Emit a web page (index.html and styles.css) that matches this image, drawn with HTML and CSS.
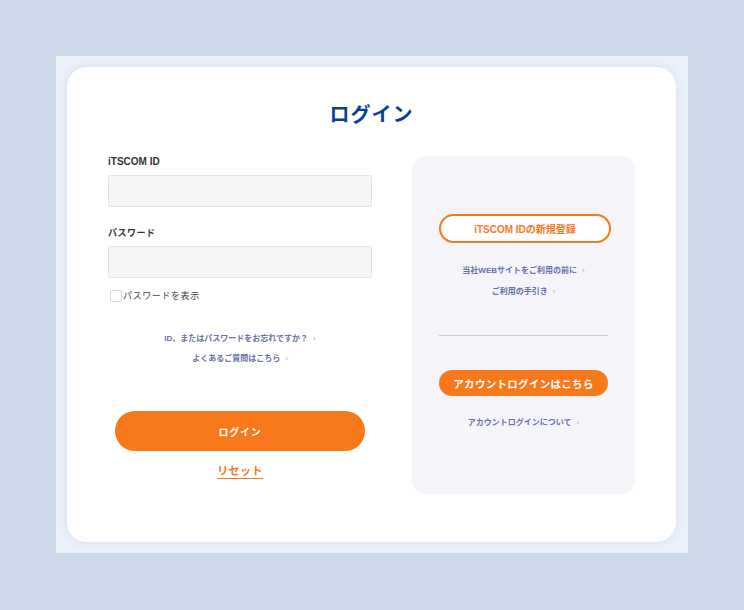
FILE: index.html
```html
<!DOCTYPE html>
<html lang="ja">
<head>
<meta charset="utf-8">
<title>ログイン</title>
<link rel="stylesheet" href="styles.css">
</head>
<body>
<div class="frame">
  <div class="card">
    <h1 class="title">ログイン</h1>
    <div class="columns">
      <div class="left">
        <label class="label label-id">iTSCOM ID</label>
        <div class="input"></div>
        <label class="label label-pw">パスワード</label>
        <div class="input"></div>
        <div class="check-row"><span class="checkbox"></span><span class="check-text">パスワードを表示</span></div>
        <div class="links">
          <a class="link">ID、またはパスワードをお忘れですか？<span class="chev">›</span></a>
          <a class="link">よくあるご質問はこちら<span class="chev">›</span></a>
        </div>
        <div class="btn-login">ログイン</div>
        <div class="reset-wrap"><span class="reset">リセット</span></div>
      </div>
      <div class="right">
        <div class="btn-register">iTSCOM IDの新規登録</div>
        <div class="rlinks">
          <a class="link">当社WEBサイトをご利用の前に<span class="chev">›</span></a>
          <a class="link">ご利用の手引き<span class="chev">›</span></a>
        </div>
        <div class="divider"></div>
        <div class="btn-account">アカウントログインはこちら</div>
        <a class="link link-about">アカウントログインについて<span class="chev">›</span></a>
      </div>
    </div>
  </div>
</div>
</body>
</html>
```
FILE: styles.css
```css
* { box-sizing: border-box; }
html, body { margin: 0; padding: 0; }
body {
  background: #cdd8ea;
  width: 744px;
  height: 610px;
  font-family: "Liberation Sans", "Noto Sans CJK JP", sans-serif;
  padding-top: 56px;
  padding-left: 56px;
}
.frame {
  width: 632px;
  height: 497px;
  background: #ebf1f9;
  padding: 11px;
}
.card {
  width: 609px;
  height: 475px;
  background: #ffffff;
  border-radius: 20px;
  box-shadow: 0 0 10px rgba(170, 190, 225, 0.35);
  padding: 32px 41px 0 41px;
}
.title {
  margin: 0;
  height: 30px;
  line-height: 30px;
  text-align: center;
  font-size: 20px;
  font-weight: 700;
  color: #0b3f94;
  letter-spacing: 1px;
  font-family: "Noto Sans CJK JP", sans-serif;
}
.columns {
  display: flex;
  gap: 40px;
  margin-top: 27px;
}
.left {
  width: 264px;
  display: flex;
  flex-direction: column;
}
.label {
  display: block;
  height: 12px;
  line-height: 12px;
  font-size: 10px;
  font-weight: 700;
  color: #333333;
}
.label-pw {
  margin-top: 20px;
  font-size: 9px;
  letter-spacing: 0.5px;
  font-family: "Noto Sans CJK JP", sans-serif;
}
.input {
  margin-top: 7px;
  height: 32px;
  background: #f6f6f6;
  border: 1px solid #e4e4e4;
  border-radius: 2px;
}
.check-row {
  margin-top: 11px;
  height: 13px;
  display: flex;
  align-items: center;
  padding-left: 2px;
}
.checkbox {
  width: 12px;
  height: 12px;
  border: 1px solid #d4d6e0;
  border-radius: 2px;
  background: #fff;
}
.check-text {
  margin-left: 1px;
  font-size: 9px;
  letter-spacing: 0.6px;
  color: #444;
  font-family: "Noto Sans CJK JP", sans-serif;
}
.links {
  margin-top: 27px;
  display: flex;
  flex-direction: column;
  align-items: center;
}
.link {
  display: block;
  height: 20px;
  line-height: 20px;
  font-size: 8px;
  font-weight: 700;
  color: #6a70a9;
  text-align: center;
  font-family: "Liberation Sans", "Noto Sans CJK JP", sans-serif;
}
.chev {
  margin-left: 5px;
  color: #a9adc9;
  font-weight: 400;
}
.btn-login {
  margin: 42px auto 0;
  width: 250px;
  height: 40px;
  border-radius: 20px;
  background: #f8781c;
  color: #fff;
  font-size: 10px;
  font-weight: 700;
  letter-spacing: 0.8px;
  display: flex;
  align-items: center;
  justify-content: center;
  font-family: "Noto Sans CJK JP", sans-serif;
}
.reset-wrap {
  margin-top: 11px;
  text-align: center;
  line-height: 16px;
}
.reset {
  font-size: 11px;
  font-weight: 700;
  color: #f8781c;
  letter-spacing: 0.4px;
  border-bottom: 1px solid #f8781c;
  font-family: "Noto Sans CJK JP", sans-serif;
}
.right {
  width: 223px;
  height: 338px;
  background: #f4f4f9;
  border-radius: 14px;
  display: flex;
  flex-direction: column;
  align-items: center;
  padding-top: 58px;
}
.btn-register {
  width: 172px;
  height: 29px;
  border: 2px solid #f8781c;
  border-radius: 15px;
  background: #fff;
  color: #f8781c;
  font-size: 10px;
  font-weight: 700;
  display: flex;
  align-items: center;
  justify-content: center;
  margin-left: 3px;
}
.rlinks {
  margin-top: 17px;
  display: flex;
  flex-direction: column;
  align-items: center;
}
.rlinks .link { height: 21px; line-height: 21px; }
.divider {
  margin-top: 33px;
  width: 169px;
  height: 1px;
  background: #c7c9e0;
}
.btn-account {
  margin-top: 34px;
  width: 169px;
  height: 26px;
  border-radius: 13px;
  background: #f8781c;
  color: #fff;
  font-size: 10.5px;
  font-weight: 700;
  letter-spacing: 0.3px;
  display: flex;
  align-items: center;
  justify-content: center;
  font-family: "Noto Sans CJK JP", sans-serif;
}
.link-about {
  margin-top: 17px;
}
```
